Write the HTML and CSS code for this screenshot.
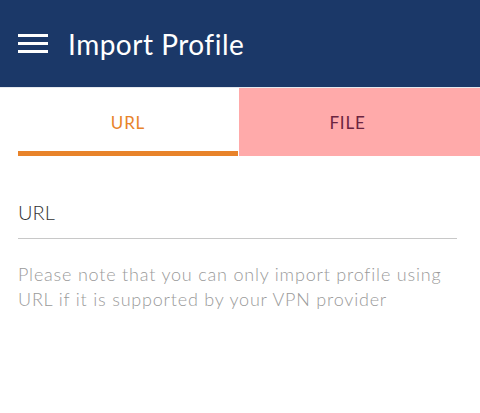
FILE: index.html
```html
<!DOCTYPE html>
<html>
<head>
<meta charset="utf-8">
<link rel="stylesheet" href="styles.css">
</head>
<body>
<header class="appbar">
  <svg class="menu" width="30" height="20" viewBox="0 0 30 20">
    <rect x="0" y="0" width="30" height="3" fill="#fff"/>
    <rect x="0" y="8" width="30" height="3" fill="#fff"/>
    <rect x="0" y="16" width="30" height="3" fill="#fff"/>
  </svg>
  <h1 class="title">Import Profile</h1>
</header>
<nav class="tabs">
  <div class="tab active"><span>URL</span></div>
  <div class="tab file"><span>FILE</span></div>
</nav>
<main class="content">
  <div class="field">URL</div>
  <p class="note">Please note that you can only import profile using URL if it is supported by your VPN provider</p>
</main>
</body>
</html>
```
FILE: styles.css
```css
html, body { margin: 0; padding: 0; background: #fff; }
body { font-family: Lato, "Open Sans", sans-serif; width: 480px; height: 413px; overflow: hidden; }
.appbar {
  height: 88px;
  background: #1b3868;
  display: flex;
  align-items: center;
  padding-left: 18px;
  box-sizing: border-box;
  border-bottom: 1px solid #e6e9ef;
}
.menu { display: block; margin-top: 1px; }
.title {
  margin: 0 0 0 20px;
  color: #fff;
  font-weight: 400;
  font-size: 28px;
  letter-spacing: 0.5px;
}
.tabs { display: flex; height: 68px; }
.tab {
  flex: 1;
  display: flex;
  align-items: center;
  justify-content: center;
  font-size: 17px;
  letter-spacing: 0.8px;
  box-sizing: border-box;
}
.tab.active {
  color: #e8832a;
  margin-left: 18px;
  margin-right: 1px;
  border-bottom: 5px solid #e8832a;
  padding-top: 5px;
}
.tab.file {
  background: #ffaaaa;
  color: #6b2440;
  flex: 0 0 241px;
  padding-right: 24px;
}
.content { padding: 0 23px 0 18px; }
.field {
  margin-top: 44px;
  font-size: 20px;
  font-weight: 300;
  color: #333;
  padding-bottom: 14px;
  border-bottom: 1px solid #c8c8c8;
}
.note {
  margin: 23px 0 0 0;
  font-size: 18px;
  font-weight: 300;
  letter-spacing: 0.8px;
  line-height: 25px;
  color: #9a9a9a;
}
```
